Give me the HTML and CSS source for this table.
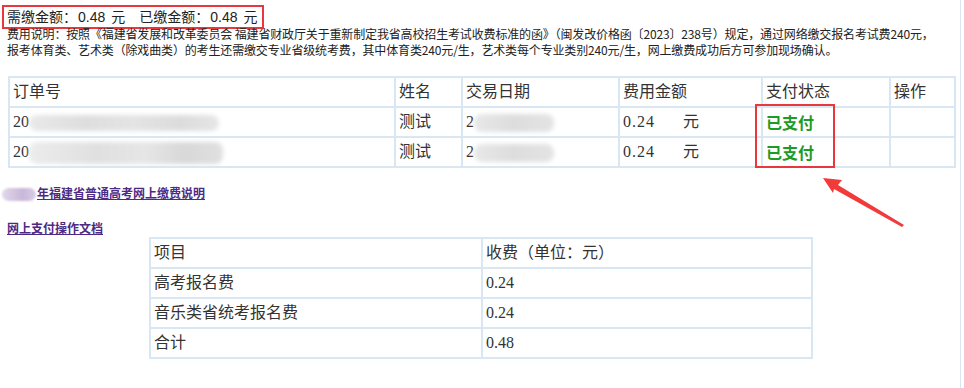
FILE: index.html
```html
<!DOCTYPE html>
<html lang="zh-CN">
<head>
<meta charset="utf-8">
<title>缴费信息</title>
<link rel="stylesheet" href="styles.css">
</head>
<body>
<div class="page">
  <div class="summary">
    <span class="sum-box">需缴金额：<span class="num">0.48</span><span class="unit">元</span>已缴金额：<span class="num">0.48</span><span class="unit last">元</span></span>
  </div>
  <p class="note">费用说明：按照《福建省发展和改革委员会 福建省财政厅关于重新制定我省高校招生考试收费标准的函》（闽发改价格函〔2023〕238号）规定，通过网络缴交报名考试费240元，<br>报考体育类、艺术类（除戏曲类）的考生还需缴交专业省级统考费，其中体育类240元/生，艺术类每个专业类别240元/生，网上缴费成功后方可参加现场确认。</p>

  <table class="orders">
    <colgroup>
      <col class="c-order"><col class="c-name"><col class="c-date"><col class="c-fee"><col class="c-status"><col class="c-op">
    </colgroup>
    <tr><td>订单号</td><td>姓名</td><td>交易日期</td><td>费用金额</td><td>支付状态</td><td>操作</td></tr>
    <tr>
      <td>20<span class="smudge s-order1"></span></td>
      <td>测试</td>
      <td>2<span class="smudge s-date"></span></td>
      <td><span class="money">0.24</span>元</td>
      <td class="paid">已支付</td>
      <td></td>
    </tr>
    <tr>
      <td>20<span class="smudge s-order2"></span></td>
      <td>测试</td>
      <td>2<span class="smudge s-date"></span></td>
      <td><span class="money">0.24</span>元</td>
      <td class="paid">已支付</td>
      <td></td>
    </tr>
  </table>

  <div class="link-row first"><a class="link" href="#"><span class="smudge s-year"></span>年福建省普通高考网上缴费说明</a></div>
  <div class="link-row second"><a class="link" href="#">网上支付操作文档</a></div>

  <table class="fees">
    <colgroup><col class="c-item"><col class="c-amount"></colgroup>
    <tr><td>项目</td><td>收费（单位：元）</td></tr>
    <tr><td>高考报名费</td><td>0.24</td></tr>
    <tr><td>音乐类省统考报名费</td><td>0.24</td></tr>
    <tr><td>合计</td><td>0.48</td></tr>
  </table>

  <div class="status-mark"></div>
  <svg class="arrow" width="964" height="388" viewBox="0 0 964 388">
    <polygon points="823,178 842,180 838,185 904,225 902,227 834,189 833,193" fill="#f23a3a"/>
  </svg>
</div>
</body>
</html>
```

FILE: styles.css
```css
html, body {
  margin: 0;
  padding: 0;
  background: #ffffff;
}

.page {
  position: relative;
  width: 961px;
  min-height: 388px;
  box-sizing: border-box;
  border-right: 1px solid #dbe6f1;
  padding: 3px 0 0 2px;
  font-family: "Noto Sans CJK SC", "Noto Sans", sans-serif;
  color: #222;
}

.summary {
  height: 23px;
}

.sum-box {
  display: inline-block;
  border: 2px solid #e8383d;
  padding: 0 4px 0 3px;
  font-size: 14px;
  line-height: 19px;
  color: #222;
}

.sum-box .num {
  font-family: "Liberation Sans", "Noto Sans", sans-serif;
  margin-left: 1px;
}

.sum-box .unit {
  margin-left: 6px;
  margin-right: 14px;
}

.sum-box .unit.last {
  margin-right: 0;
}

.note {
  margin: 0 0 0 5px;
  font-size: 12px;
  line-height: 16px;
  color: #222;
  white-space: nowrap;
  letter-spacing: -0.15px;
}

.orders,
.fees {
  border-collapse: collapse;
  table-layout: fixed;
  font-family: "Liberation Serif", "Noto Sans CJK SC", serif;
  font-size: 16px;
  color: #333;
}

.orders td,
.fees td {
  border: 2px solid #d9e6f3;
  padding: 0 3px;
  height: 28px;
  line-height: 28px;
  box-sizing: border-box;
  white-space: nowrap;
  overflow: hidden;
  vertical-align: middle;
}

.orders {
  margin: 18px 0 0 6px;
  width: 946px;
}

.c-order { width: 386px; }
.c-name { width: 67px; }
.c-date { width: 157px; }
.c-fee { width: 143px; }
.c-status { width: 128px; }
.c-op { width: 65px; }

.money {
  display: inline-block;
  width: 60px;
  letter-spacing: 1px;
}

.paid {
  color: #1f9a22;
  font-family: "Noto Sans CJK SC", sans-serif;
  font-weight: bold;
}

.smudge {
  display: inline-block;
  vertical-align: middle;
  border-radius: 8px;
  filter: blur(2px);
}

.s-order1 {
  width: 190px;
  height: 16px;
  background: linear-gradient(90deg, #e9e9e9 0%, #dedede 30%, #e4e4e4 55%, #dcdcdc 80%, #e6e6e6 100%);
}

.s-order2 {
  width: 194px;
  height: 22px;
  background: linear-gradient(90deg, #ececec 0%, #e0e0e0 35%, #e6e6e6 60%, #d8d8d8 80%, #e0e0e0 100%);
}

.s-date {
  width: 80px;
  height: 18px;
  background: linear-gradient(90deg, #e8e8e8 0%, #dddddd 50%, #e4e4e4 100%);
}

.link-row {
  font-size: 12px;
  line-height: 16px;
}

.link-row.first {
  margin-top: 17px;
}

.link-row.second {
  margin: 19px 0 0 5px;
}

.link {
  color: #4f2a85;
  font-weight: bold;
  text-decoration: underline;
}

.s-year {
  width: 34px;
  height: 13px;
  border-radius: 7px;
  background: linear-gradient(90deg, #e2d8ea 0%, #c9b7da 60%, #d8cce4 100%);
  filter: blur(1px);
  margin-right: 1px;
}

.fees {
  margin: 1px auto 0;
  width: 662px;
}

.c-item { width: 332px; }
.c-amount { width: 330px; }

.status-mark {
  position: absolute;
  left: 755px;
  top: 104px;
  width: 80px;
  height: 64px;
  box-sizing: border-box;
  border: 2px solid #e8383d;
}

.arrow {
  position: absolute;
  left: 0;
  top: 0;
  pointer-events: none;
}
```
